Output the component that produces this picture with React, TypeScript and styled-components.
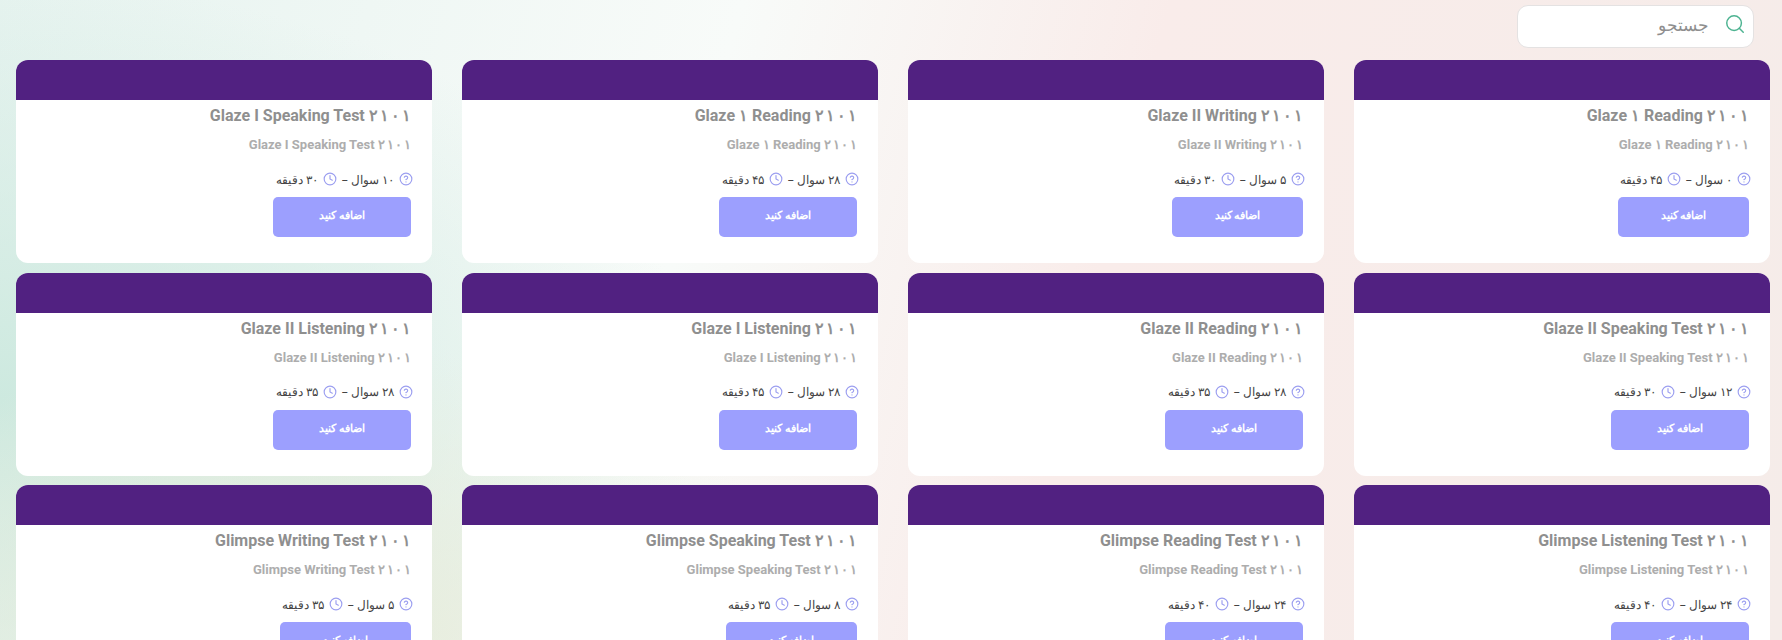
import React from "react";
import styled, { createGlobalStyle } from "styled-components";
import { CircleHelp, Clock, Search } from "lucide-react";

type TestType = {
  name: string;
  questions: string;
  minutes: string;
  wide?: boolean;
};

const YEAR = ["۲", "۱", "۰", "۱"];

const tests: TestType[] = [
  { name: "Glaze ۱ Reading", questions: "۰", minutes: "۴۵" },
  { name: "Glaze II Writing", questions: "۵", minutes: "۳۰" },
  { name: "Glaze ۱ Reading", questions: "۲۸", minutes: "۴۵", wide: true },
  { name: "Glaze I Speaking Test", questions: "۱۰", minutes: "۳۰", wide: true },
  { name: "Glaze II Speaking Test", questions: "۱۲", minutes: "۳۰", wide: true },
  { name: "Glaze II Reading", questions: "۲۸", minutes: "۳۵", wide: true },
  { name: "Glaze I Listening", questions: "۲۸", minutes: "۴۵", wide: true },
  { name: "Glaze II Listening", questions: "۲۸", minutes: "۳۵", wide: true },
  { name: "Glimpse Listening Test", questions: "۲۴", minutes: "۴۰", wide: true },
  { name: "Glimpse Reading Test", questions: "۲۴", minutes: "۴۰", wide: true },
  { name: "Glimpse Speaking Test", questions: "۸", minutes: "۳۵" },
  { name: "Glimpse Writing Test", questions: "۵", minutes: "۳۵" },
];

const GlobalStyle = createGlobalStyle`
  html, body {
    margin: 0;
    height: 100%;
    overflow: hidden;
  }
  body {
    font-family: Roboto, "Noto Sans", sans-serif;
  }
`;

const Page = styled.div`
  height: 640px;
  overflow: hidden;
  box-sizing: border-box;
  padding: 5px 12px 0 16px;
  direction: rtl;
  background:
    radial-gradient(ellipse 520px 300px at 300px 640px, #e6ebd9 0%, rgba(230, 235, 217, 0) 100%),
    radial-gradient(ellipse 700px 420px at 0px 400px, #cde9df 0%, rgba(205, 233, 223, 0) 100%),
    linear-gradient(105deg, #e6f3ef 0%, #f8fbf9 38%, #f9ecea 60%, #f5ece9 100%);
`;

const Toolbar = styled.div`
  display: flex;
  justify-content: flex-start;
  padding-right: 16px;
`;

const SearchBox = styled.div`
  width: 237px;
  height: 43px;
  box-sizing: border-box;
  display: flex;
  align-items: center;
  gap: 15px;
  padding: 0 7px 5px;
  background: #fff;
  border: 1px solid #e4e2e2;
  border-radius: 11px;
  color: #4db391;
`;

const SearchInput = styled.input`
  flex: 1;
  min-width: 0;
  border: 0;
  padding: 0;
  outline: 0;
  background: transparent;
  font-family: "Noto Sans", sans-serif;
  font-size: 17px;
  color: #888;

  &::placeholder {
    color: #8e8e8e;
    opacity: 1;
  }
`;

const Grid = styled.div`
  display: grid;
  grid-template-columns: repeat(4, 416px);
  justify-content: space-between;
  row-gap: 9.7px;
  margin-top: 12px;
`;

const Card = styled.div`
  height: 203px;
  background: #fff;
  border-radius: 12px;
  overflow: hidden;
`;

const CardHeader = styled.div`
  height: 40px;
  background: #512181;
`;

const CardBody = styled.div`
  display: flex;
  flex-direction: column;
  align-items: flex-start;
  padding: 4px 21px 0;
`;

const Title = styled.h3`
  margin: 0;
  direction: ltr;
  font-size: 16px;
  line-height: 24px;
  font-weight: 700;
  color: #8f8f8f;
  white-space: nowrap;
`;

const Subtitle = styled.p`
  margin: 6px 0 0;
  direction: ltr;
  font-size: 13px;
  line-height: 22px;
  font-weight: 700;
  color: #adadad;
  white-space: nowrap;
`;

// letter-spacing has no effect on these digits, so each one gets its own margin
const Digit = styled.span`
  & + & {
    margin-left: 0.13em;
  }
`;

const Meta = styled.div`
  display: flex;
  align-items: center;
  gap: 5px;
  margin: 13px -2px 0 0;
  height: 20px;
  font-family: "Noto Sans", sans-serif;
  font-size: 12px;
  color: #444;
  white-space: nowrap;

  svg {
    color: #9c9ff0;
  }
`;

const AddButton = styled.button<{ $wide?: boolean }>`
  width: ${(props) => (props.$wide ? "138px" : "131px")};
  height: 40px;
  margin-top: 8px;
  padding: 0 0 5px;
  border: 0;
  border-radius: 5px;
  background: #9c9ffe;
  color: #fff;
  font-family: "Noto Sans", sans-serif;
  font-size: 11px;
  font-weight: 700;
`;

const Year = () => (
  <>
    {YEAR.map((digit, i) => (
      <Digit key={i}>{digit}</Digit>
    ))}
  </>
);

export default function App() {
  return (
    <Page>
      <GlobalStyle />
      <Toolbar>
        <SearchBox>
          <Search size={22} strokeWidth={1.6} />
          <SearchInput placeholder="جستجو" />
        </SearchBox>
      </Toolbar>
      <Grid>
        {tests.map((test, i) => (
          <Card key={i}>
            <CardHeader />
            <CardBody>
              <Title>
                {test.name} <Year />
              </Title>
              <Subtitle>
                {test.name} <Year />
              </Subtitle>
              <Meta>
                <CircleHelp size={14} />
                <span>{test.questions} سوال –</span>
                <Clock size={14} />
                <span>{test.minutes} دقیقه</span>
              </Meta>
              <AddButton $wide={test.wide}>اضافه کنید</AddButton>
            </CardBody>
          </Card>
        ))}
      </Grid>
    </Page>
  );
}
